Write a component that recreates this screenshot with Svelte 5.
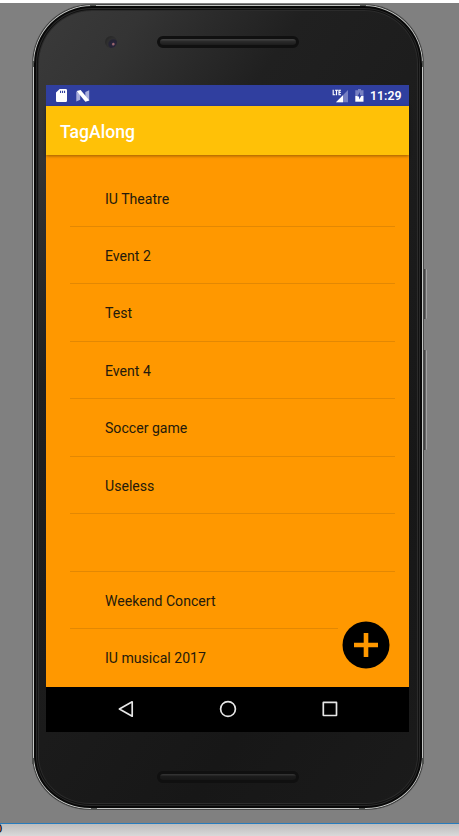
<script>
  const events = [
    'IU Theatre',
    'Event 2',
    'Test',
    'Event 4',
    'Soccer game',
    'Useless',
    '',
    'Weekend Concert',
    'IU musical 2017',
  ];
</script>

<div class="desktop">
  <div class="phone">
    <span class="band tl"></span><span class="band tr"></span>
    <span class="band bl"></span><span class="band br"></span>
    <span class="band lt"></span><span class="band rt"></span>
    <span class="band lb"></span><span class="band rb"></span>
    <span class="key power"></span>
    <span class="key volume"></span>
    <div class="body">
      <div class="forehead">
        <span class="camera"></span>
        <span class="speaker"></span>
      </div>

      <div class="screen">
        <div class="status">
          <svg class="sd" width="11" height="13" viewBox="0 0 11 13">
            <path fill="#fff" fill-rule="evenodd" d="M3.7 0H9.8Q11 0 11 1.2V11.8Q11 13 9.8 13H1.2Q0 13 0 11.8V3.6ZM4 1.7V4H5.1V1.7ZM6 1.7V4H7.1V1.7ZM8 1.7V4H9.1V1.7Z" />
          </svg>
          <svg class="nougat" width="14" height="12" viewBox="0 0 14 12">
            <path fill="#a9afdc" d="M0.3 1.5L4.2 4V9.8L0.3 11.6ZM9.3 2L13.2 0.2V10.4L9.3 8Z" />
            <path fill="#fff" d="M0.6 1L4.6 0.1L13.4 10.6L9.4 11.8Z" />
          </svg>
          <span class="grow"></span>
          <svg class="signal" width="17" height="14" viewBox="0 0 17 14">
            <path fill="#7780c2" d="M16 1V13.2H4Z" />
            <path fill="#fff" d="M11 6.2V13.2H4Z" />
            <path fill="#303f9f" d="M0 0H9V7H0Z" />
            <path d="M1.2 .7V5.7H3.3M3 1.2H6.1M4.5 1.2V6.2M9 1.2H7V5.7H9M7 3.4H8.8" fill="none" stroke="#fff" stroke-width="1.15" />
          </svg>
          <svg class="battery" width="9" height="13" viewBox="0 0 9 13">
            <path fill="#7780c2" d="M3 0H6V1.3H8.5V7H.3V1.3H3Z" />
            <path fill="#fff" d="M.3 7H8.5V12.7H.3Z" />
            <path fill="#303f9f" d="M5 3L2.4 7.6H4.1V10.6L6.7 6.2H5Z" />
          </svg>
          <span class="clock">11:29</span>
        </div>
        <div class="appbar">TagAlong</div>
        <div class="content">
          <div class="list">
            {#each events as name}
              <div class="row">{name}</div>
            {/each}
          </div>
          <button class="fab" aria-label="Add event">
            <svg width="48" height="48" viewBox="0 0 48 48">
              <circle cx="24" cy="24" r="23.5" fill="#000" />
              <path d="M24 12V36M12 24H36" stroke="#ff9800" stroke-width="4.6" />
            </svg>
          </button>
        </div>
        <div class="nav">
          <svg width="18" height="18" viewBox="0 0 18 18"><path d="M15.2 1.8V16.2L2.4 9Z" /></svg>
          <svg width="18" height="18" viewBox="0 0 18 18"><circle cx="9" cy="9" r="7.4" /></svg>
          <svg width="18" height="18" viewBox="0 0 18 18"><rect x="2.3" y="2.3" width="13.2" height="13.2" rx=".3" /></svg>
        </div>
      </div>

      <div class="chin"><span class="speaker"></span></div>
    </div>
  </div>
  <div class="below"><span>0</span></div>
</div>

<style>
  .desktop {
    width: 459px;
    height: 836px;
    box-sizing: border-box;
    border-top: 3px solid #fff;
    background: #808080;
    display: flex;
    flex-direction: column;
    align-items: flex-start;
    overflow: hidden;
    font-family: Roboto, sans-serif;
  }
  .phone {
    position: relative;
    flex: none;
    box-sizing: border-box;
    width: 392px;
    height: 806px;
    margin: 1px 0 0 32px;
    padding: 1px;
    border-radius: 60px 60px 58px 58px / 60px 60px 54px 54px;
    background: #4b4b4b;
  }
  .body {
    box-sizing: border-box;
    height: 804px;
    border-radius: 59px 59px 57px 57px / 59px 59px 53px 53px;
    padding: 0 13px;
    display: flex;
    flex-direction: column;
    background: linear-gradient(125deg, #3b3b3b 0, #343434 12%, #202020 29%, #1c1c1c 50%, #171717 75%, #1b1b1b 100%);
    box-shadow:
      inset 0 0 0 1px #c4c6c4,
      inset 0 0 0 3px #080808,
      inset 0 0 0 4px #292929,
      inset 0 0 0 5px #111,
      inset 0 0 0 6px #2b2b2b;
  }
  .forehead {
    position: relative;
    height: 80px;
    flex: none;
    display: flex;
    justify-content: center;
    align-items: flex-start;
    padding-top: 31px;
    box-sizing: border-box;
  }
  .camera {
    position: absolute;
    left: 59px;
    top: 31px;
    width: 12px;
    height: 12px;
    border-radius: 50%;
    background: radial-gradient(circle at 69% 68%, #9b6670 0 6%, #28243a 16%, #242333 36%, #303030 48%, #292929 68%);
  }
  .speaker {
    width: 142px;
    height: 12px;
    box-sizing: border-box;
    border: 3px solid #101010;
    border-radius: 6px;
    background: linear-gradient(#404040 0 1px, #2c2c2c 2px, #1c1c1c);
  }
  .chin .speaker { background: linear-gradient(#323232 0 1px, #1c1c1c 2px, #161616); }
  .screen {
    width: 363px;
    height: 647px;
    flex: none;
    display: flex;
    flex-direction: column;
    background: #ff9800;
  }
  .status {
    height: 21px;
    flex: none;
    background: #303f9f;
    display: flex;
    align-items: center;
    color: #fff;
  }
  .status svg { flex: none; }
  .sd { margin-left: 10px; }
  .nougat { margin-left: 9px; }
  .grow { flex: 1; }
  .signal { margin-right: 6px; }
  .battery { margin-right: 6px; }
  .clock {
    width: 32px;
    margin-right: 7px;
    font-size: 12.3px;
    font-weight: 600;
    line-height: 22px;
    white-space: nowrap;
  }
  .appbar {
    position: relative;
    z-index: 1;
    height: 49px;
    flex: none;
    padding: 1px 0 0 14px;
    box-sizing: border-box;
    background: #ffc107;
    box-shadow: 0 1px 3px #0006;
    color: #fff;
    font-size: 17.6px;
    font-weight: 500;
    line-height: 50px;
  }
  .content {
    position: relative;
    height: 532px;
    flex: none;
    overflow: hidden;
  }
  .list { padding: 14.6px 14px 0 24px; }
  .row {
    height: 57.43px;
    box-sizing: border-box;
    border-bottom: 1px solid #e38803;
    padding-left: 35px;
    font-size: 14.1px;
    line-height: 58px;
    color: #241a0c;
  }
  .row:last-child { border-bottom-color: transparent; }
  .fab {
    position: absolute;
    right: 0;
    bottom: 0;
    width: 71px;
    height: 84px;
    padding: 0 0 0 4px;
    border: 0;
    background: #ff9800;
    display: flex;
    align-items: flex-start;
  }
  .fab svg { margin-top: 18px; }
  .nav {
    height: 45px;
    flex: none;
    background: #000;
    display: flex;
    justify-content: center;
    align-items: center;
    gap: 84px;
    padding-bottom: 2px;
    box-sizing: border-box;
  }
  .nav svg {
    fill: none;
    stroke: #e6e6e6;
    stroke-width: 1.7;
    stroke-linejoin: round;
  }
  .chin {
    flex: 1;
    display: flex;
    justify-content: center;
    align-items: flex-start;
    padding-top: 39px;
  }
  .band { position: absolute; background: #505250; width: 6px; height: 2px; }
  .tl { left: 58px; top: 0; }
  .tr { right: 58px; top: 0; }
  .bl { left: 59px; bottom: 0; }
  .br { right: 59px; bottom: 0; }
  .lt, .rt, .lb, .rb { width: 2px; height: 6px; }
  .lt { left: 0; top: 57px; }
  .rt { right: 0; top: 57px; }
  .lb { left: 0; bottom: 46px; }
  .rb { right: 0; bottom: 46px; }
  .key {
    position: absolute;
    right: -3px;
    width: 3px;
    box-sizing: border-box;
    border-left: 1px solid #454545;
    border-right: 1px solid #a2a2a2;
    background: #666;
    border-radius: 0 1px 1px 0;
  }
  .power { top: 265px; height: 50px; }
  .volume { top: 346px; height: 100px; }
  .below {
    align-self: stretch;
    flex: none;
    height: 13px;
    margin-top: 13px;
    border-top: 1px solid #287cbc;
    box-sizing: border-box;
    background: linear-gradient(#bcbcbc, #d9d9d9);
    overflow: hidden;
  }
  .below span {
    display: block;
    margin-left: -5px;
    font: 13px/10px "Liberation Sans", sans-serif;
    color: #000;
    text-shadow: -1px 0 #e69a52;
  }
</style>
